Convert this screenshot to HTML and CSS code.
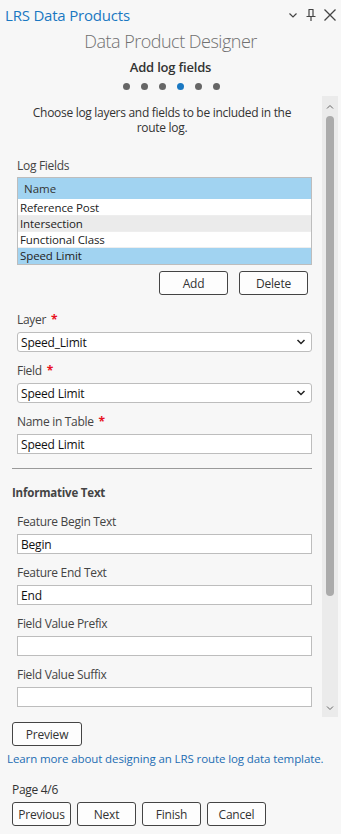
FILE: index.html
```html
<!DOCTYPE html>
<html lang="en">
<head>
    <meta charset="UTF-8">
    <meta name="viewport" content="width=device-width, initial-scale=1.0">
    <title>LRS Data Products</title>
    <link rel="stylesheet" href="styles.css">
</head>
<body>
    <div class="pane">
        <!-- Title bar -->
        <div class="titlebar">
            <div class="pane-title">LRS Data Products</div>
            <div class="pane-actions">
                <svg width="12" height="12" viewBox="0 0 12 12"><path d="M2.5 4.5 L6 8 L9.5 4.5" fill="none" stroke="#444" stroke-width="1.2"/></svg>
                <svg width="12" height="14" viewBox="0 0 12 14"><path d="M3.5 1.5 H8.5 M4 1.5 V8 M8 1.5 V8 M1.5 8.5 H10.5 M6 8.5 V13" fill="none" stroke="#444" stroke-width="1.2"/></svg>
                <svg width="14" height="14" viewBox="0 0 14 14"><path d="M1.5 1.5 L12.5 12.5 M12.5 1.5 L1.5 12.5" fill="none" stroke="#444" stroke-width="1.3"/></svg>
            </div>
        </div>

        <div class="designer-title">Data Product Designer</div>
        <div class="step-title">Add log fields</div>
        <div class="steps">
            <span class="dot"></span>
            <span class="dot"></span>
            <span class="dot"></span>
            <span class="dot active"></span>
            <span class="dot"></span>
            <span class="dot"></span>
        </div>

        <!-- Scrolling form -->
        <div class="scroll-wrap">
            <div class="scroll-content">
                <p class="intro">Choose log layers and fields to be included in the route log.</p>

                <div class="group">
                    <div class="label log-label">Log Fields</div>
                    <div class="grid">
                        <div class="grid-head">Name</div>
                        <div class="grid-row">Reference Post</div>
                        <div class="grid-row alt">Intersection</div>
                        <div class="grid-row">Functional Class</div>
                        <div class="grid-row selected">Speed Limit</div>
                    </div>
                    <div class="grid-buttons">
                        <button class="btn">Add</button>
                        <button class="btn">Delete</button>
                    </div>
                </div>

                <div class="group">
                    <div class="label first">Layer <span class="req">*</span></div>
                    <div class="combo">
                        <span>Speed_Limit</span>
                        <svg width="10" height="8" viewBox="0 0 10 8"><path d="M1.5 2 L5 5.5 L8.5 2" fill="none" stroke="#222" stroke-width="1.5"/></svg>
                    </div>
                    <div class="label">Field <span class="req">*</span></div>
                    <div class="combo">
                        <span>Speed Limit</span>
                        <svg width="10" height="8" viewBox="0 0 10 8"><path d="M1.5 2 L5 5.5 L8.5 2" fill="none" stroke="#222" stroke-width="1.5"/></svg>
                    </div>
                    <div class="label">Name in Table <span class="req">*</span></div>
                    <div class="textbox">Speed Limit</div>
                </div>

                <hr class="divider">

                <div class="section-title">Informative Text</div>
                <div class="group">
                    <div class="label section-first">Feature Begin Text</div>
                    <div class="textbox">Begin</div>
                    <div class="label">Feature End Text</div>
                    <div class="textbox">End</div>
                    <div class="label">Field Value Prefix</div>
                    <div class="textbox"></div>
                    <div class="label">Field Value Suffix</div>
                    <div class="textbox"></div>
                </div>
            </div>
            <div class="scrollbar">
                <svg width="8" height="6" viewBox="0 0 8 6"><path d="M1 4.5 L4 1.5 L7 4.5" fill="none" stroke="#666" stroke-width="1"/></svg>
                <div class="thumb-track"><div class="thumb"></div></div>
                <svg width="8" height="6" viewBox="0 0 8 6"><path d="M1 1.5 L4 4.5 L7 1.5" fill="none" stroke="#666" stroke-width="1"/></svg>
            </div>
        </div>

        <!-- Footer -->
        <div class="footer">
            <button class="btn preview">Preview</button>
            <a class="learn-link" href="#">Learn more about designing an LRS route log data template.</a>
            <div class="page-num">Page 4/6</div>
            <div class="nav-buttons">
                <button class="btn">Previous</button>
                <button class="btn">Next</button>
                <button class="btn">Finish</button>
                <button class="btn">Cancel</button>
            </div>
        </div>
    </div>
</body>
</html>
```

FILE: styles.css
```css
* {
    box-sizing: border-box;
    margin: 0;
    padding: 0;
    font-family: 'Open Sans', 'Noto Sans', sans-serif;
}

body {
    background-color: #f7f7f7;
    color: #333333;
    font-size: 12px;
}

.pane {
    width: 341px;
    height: 834px;
    display: flex;
    flex-direction: column;
}

.titlebar {
    height: 30px;
    display: flex;
    align-items: center;
    justify-content: space-between;
    padding: 0 4px 0 5px;
}

.pane-title {
    font-size: 15px;
    color: #1a78c2;
    letter-spacing: -0.2px;
}

.pane-actions {
    display: flex;
    align-items: center;
    gap: 6px;
}

.designer-title {
    text-align: center;
    font-size: 18px;
    font-weight: 300;
    color: #707070;
    line-height: 24px;
    margin-top: -1px;
    letter-spacing: -0.5px;
}

.step-title {
    text-align: center;
    font-size: 13px;
    font-weight: 600;
    color: #333333;
    margin-top: 5px;
    line-height: 18px;
    letter-spacing: -0.2px;
}

.steps {
    display: flex;
    justify-content: center;
    gap: 11px;
    margin-top: 7px;
    padding-left: 2px;
}

.dot {
    width: 7px;
    height: 7px;
    border-radius: 50%;
    background-color: #666666;
}

.dot.active {
    background-color: #1a78c2;
}

.scroll-wrap {
    display: flex;
    height: 621px;
    margin-top: 6px;
}

.scroll-content {
    flex: 1;
    overflow: hidden;
    padding: 9px 10px 0 12px;
}

.intro {
    text-align: center;
    line-height: 15px;
    padding: 0 16px;
    font-size: 12px;
    letter-spacing: -0.3px;
}

.group {
    padding-left: 5px;
}

.label {
    color: #444444;
    line-height: 15px;
    margin-top: 11px;
    margin-bottom: 5px;
    font-size: 12px;
    letter-spacing: -0.3px;
}

.label.log-label {
    margin-top: 23px;
    margin-bottom: 4px;
}

.label.first {
    margin-top: 17px;
}

.label.section-first {
    margin-top: 14px;
}

.req {
    color: #e81123;
    font-weight: 700;
    margin-left: 2px;
}

.grid {
    border: 1px solid #bdbdbd;
    background-color: #ffffff;
}

.grid-head {
    height: 22px;
    line-height: 22px;
    padding-left: 6px;
    background-color: #a1d3f1;
    border-bottom: 1px solid #ffffff;
    color: #333333;
    font-size: 11.5px;
}

.grid-row {
    height: 16px;
    line-height: 15px;
    padding-left: 2px;
    background-color: #ffffff;
    border-bottom: 1px solid #eeeeee;
    color: #222222;
    font-size: 11.5px;
    letter-spacing: -0.1px;
}

.grid-row.alt {
    background-color: #ebebeb;
}

.grid-row.selected {
    background-color: #a1d3f1;
    border-bottom: none;
}

.grid-buttons {
    display: flex;
    justify-content: flex-end;
    gap: 11px;
    margin-top: 6px;
    padding-right: 4px;
}

.btn {
    height: 24px;
    min-width: 59px;
    padding: 0 8px;
    background-color: #fdfdfd;
    border: 1px solid #444444;
    border-radius: 3px;
    color: #333333;
    font-size: 12px;
    letter-spacing: -0.2px;
}

.grid-buttons .btn {
    width: 69px;
}

.combo,
.textbox {
    height: 20px;
    display: flex;
    align-items: center;
    justify-content: space-between;
    padding: 0 5px 0 3px;
    background-color: #ffffff;
    border: 1px solid #bdbdbd;
    color: #111111;
    font-size: 12px;
    letter-spacing: -0.2px;
}

.combo {
    border-radius: 3px;
}

.divider {
    border: none;
    border-top: 1px solid #9a9a9a;
    margin-top: 14px;
}

.section-title {
    font-weight: 700;
    color: #444444;
    margin-top: 16px;
    line-height: 15px;
    font-size: 11.5px;
    letter-spacing: -0.2px;
}

.scrollbar {
    width: 16px;
    margin-right: 3px;
    background-color: #ebebeb;
    display: flex;
    flex-direction: column;
    align-items: center;
    padding: 8px 0 6px;
}

.thumb-track {
    flex: 1;
    width: 100%;
    padding: 6px 4px 0;
    margin-bottom: 4px;
}

.thumb {
    height: 480px;
    background-color: #ababab;
    border-radius: 4px;
}

.footer {
    padding: 5px 12px 0 12px;
}

.preview {
    width: 70px;
}

.learn-link {
    display: block;
    margin: 5px 0 0 -5px;
    color: #1d6db3;
    text-decoration: none;
    font-size: 11.5px;
    letter-spacing: -0.1px;
    line-height: 16px;
}

.page-num {
    margin-top: 15px;
    line-height: 15px;
    color: #333333;
    font-size: 12px;
    letter-spacing: -0.3px;
}

.nav-buttons {
    display: flex;
    gap: 6px;
    margin-top: 5px;
}

.nav-buttons .btn {
    width: 59px;
    padding: 0;
}
```
